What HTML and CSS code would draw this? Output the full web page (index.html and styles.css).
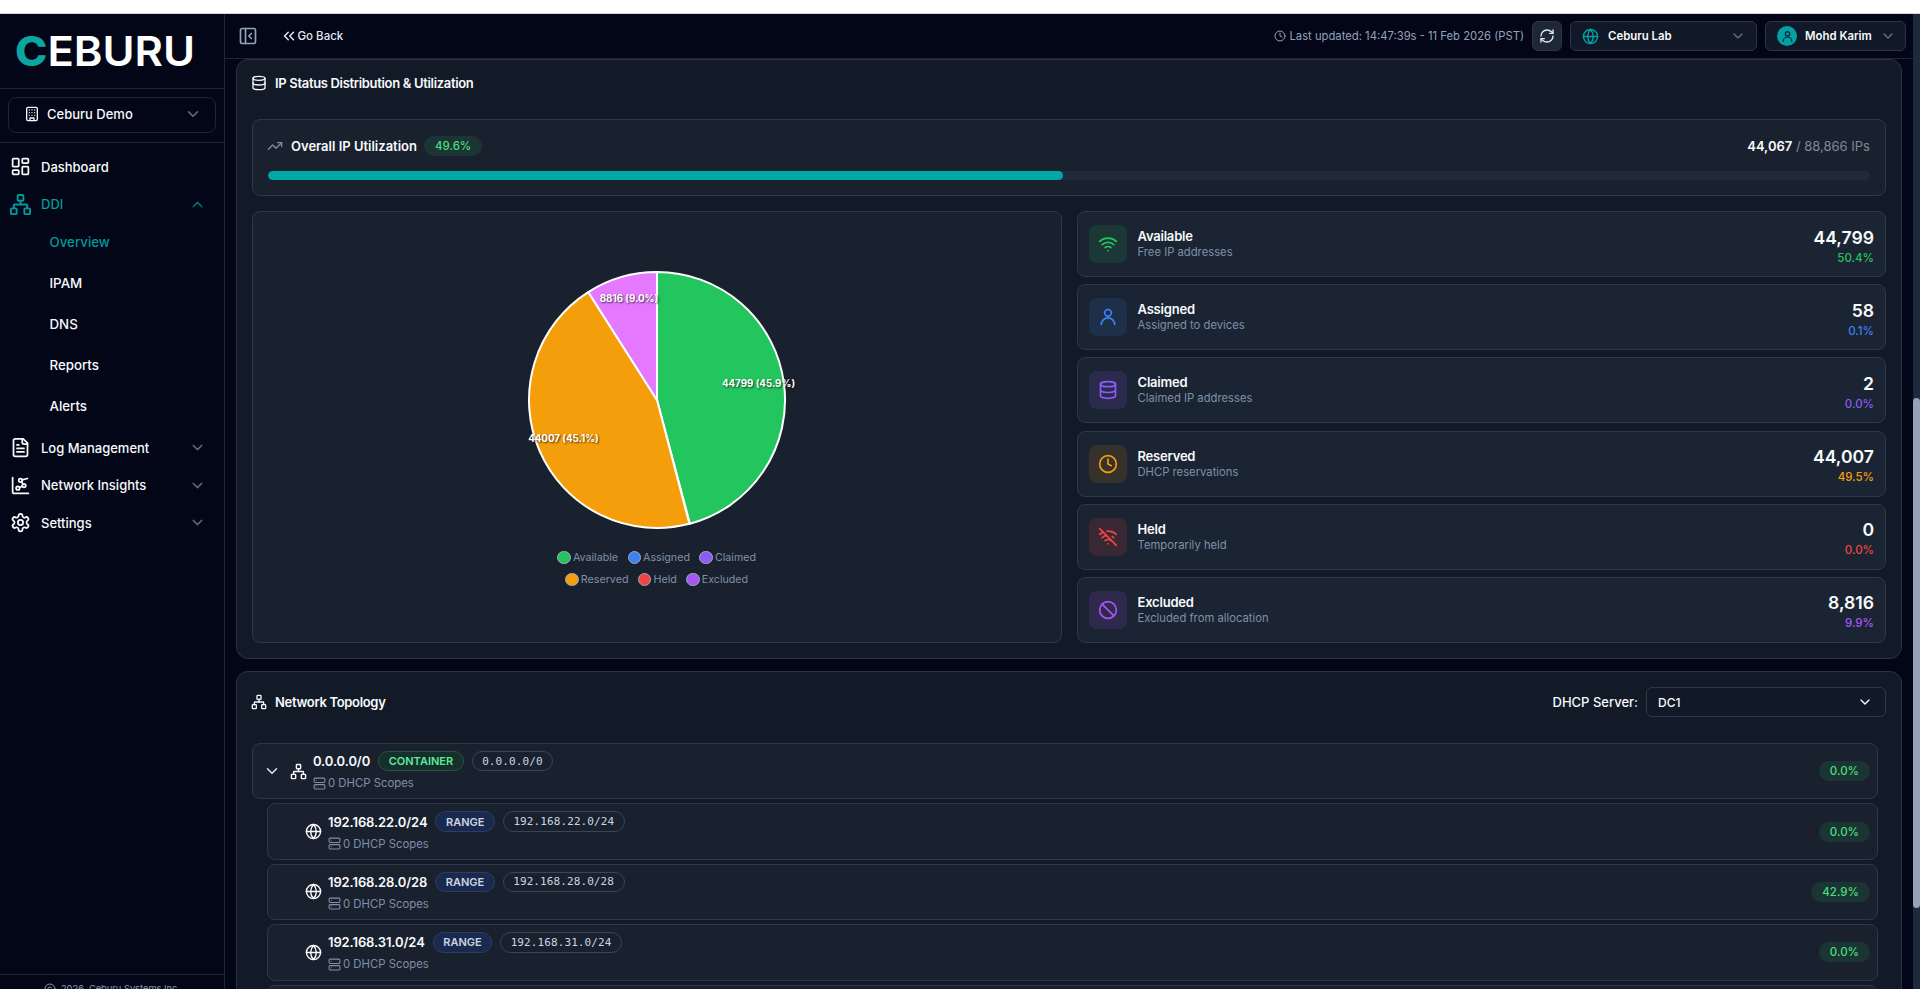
FILE: index.html
```html
<!DOCTYPE html>
<html lang="en">
<head>
<meta charset="utf-8">
<title>Ceburu - DDI Overview</title>
<link rel="stylesheet" href="styles.css">
</head>
<body>
<svg class="sprite" aria-hidden="true">
  <symbol id="i-panel" viewBox="0 0 24 24"><rect width="18" height="18" x="3" y="3" rx="2"/><path d="M9 3v18"/><path d="m16 15-3-3 3-3"/></symbol>
  <symbol id="i-chevrons" viewBox="0 0 24 24"><path d="m11 17-5-5 5-5"/><path d="m18 17-5-5 5-5"/></symbol>
  <symbol id="i-building" viewBox="0 0 24 24"><rect width="16" height="20" x="4" y="2" rx="2"/><path d="M9 22v-4h6v4"/><path d="M8 6h.01M16 6h.01M12 6h.01M12 10h.01M12 14h.01M16 10h.01M16 14h.01M8 10h.01M8 14h.01"/></symbol>
  <symbol id="i-dash" viewBox="0 0 24 24"><rect width="7" height="9" x="3" y="3" rx="1"/><rect width="7" height="5" x="14" y="3" rx="1"/><rect width="7" height="9" x="14" y="12" rx="1"/><rect width="7" height="5" x="3" y="16" rx="1"/></symbol>
  <symbol id="i-network" viewBox="0 0 24 24"><rect x="16" y="16" width="6" height="6" rx="1"/><rect x="2" y="16" width="6" height="6" rx="1"/><rect x="9" y="2" width="6" height="6" rx="1"/><path d="M5 16v-3a1 1 0 0 1 1-1h12a1 1 0 0 1 1 1v3"/><path d="M12 12V8"/></symbol>
  <symbol id="i-file" viewBox="0 0 24 24"><path d="M15 2H6a2 2 0 0 0-2 2v16a2 2 0 0 0 2 2h12a2 2 0 0 0 2-2V7Z"/><path d="M14 2v4a2 2 0 0 0 2 2h4"/><path d="M10 9H8M16 13H8M16 17H8"/></symbol>
  <symbol id="i-insights" viewBox="0 0 24 24"><path d="m13.11 7.664 1.78 2.672"/><path d="m14.162 12.788-3.324 1.424"/><path d="m20 4-6.06 1.515"/><path d="M3 3v16a2 2 0 0 0 2 2h16"/><circle cx="12" cy="6" r="2"/><circle cx="16" cy="12" r="2"/><circle cx="9" cy="15" r="2"/></symbol>
  <symbol id="i-settings" viewBox="0 0 24 24"><path d="M12.22 2h-.44a2 2 0 0 0-2 2v.18a2 2 0 0 1-1 1.73l-.43.25a2 2 0 0 1-2 0l-.15-.08a2 2 0 0 0-2.73.73l-.22.38a2 2 0 0 0 .73 2.73l.15.1a2 2 0 0 1 1 1.72v.51a2 2 0 0 1-1 1.74l-.15.09a2 2 0 0 0-.73 2.73l.22.38a2 2 0 0 0 2.73.73l.15-.08a2 2 0 0 1 2 0l.43.25a2 2 0 0 1 1 1.73V20a2 2 0 0 0 2 2h.44a2 2 0 0 0 2-2v-.18a2 2 0 0 1 1-1.73l.43-.25a2 2 0 0 1 2 0l.15.08a2 2 0 0 0 2.73-.73l.22-.39a2 2 0 0 0-.73-2.73l-.15-.08a2 2 0 0 1-1-1.74v-.5a2 2 0 0 1 1-1.74l.15-.09a2 2 0 0 0 .73-2.73l-.22-.38a2 2 0 0 0-2.73-.73l-.15.08a2 2 0 0 1-2 0l-.43-.25a2 2 0 0 1-1-1.73V4a2 2 0 0 0-2-2z"/><circle cx="12" cy="12" r="3"/></symbol>
  <symbol id="i-down" viewBox="0 0 24 24"><path d="m6 9 6 6 6-6"/></symbol>
  <symbol id="i-up" viewBox="0 0 24 24"><path d="m18 15-6-6-6 6"/></symbol>
  <symbol id="i-clock" viewBox="0 0 24 24"><circle cx="12" cy="12" r="10"/><path d="M12 6v6l4 2"/></symbol>
  <symbol id="i-refresh" viewBox="0 0 24 24"><path d="M3 12a9 9 0 0 1 9-9 9.75 9.75 0 0 1 6.74 2.74L21 8"/><path d="M21 3v5h-5"/><path d="M21 12a9 9 0 0 1-9 9 9.75 9.75 0 0 1-6.74-2.74L3 16"/><path d="M8 16H3v5"/></symbol>
  <symbol id="i-globe" viewBox="0 0 24 24"><circle cx="12" cy="12" r="10"/><path d="M12 2a14.5 14.5 0 0 0 0 20 14.5 14.5 0 0 0 0-20"/><path d="M2 12h20"/></symbol>
  <symbol id="i-user" viewBox="0 0 24 24"><circle cx="12" cy="7" r="4"/><path d="M20 21a8 8 0 0 0-16 0"/></symbol>
  <symbol id="i-db" viewBox="0 0 24 24"><ellipse cx="12" cy="5" rx="9" ry="3"/><path d="M3 5v14a9 3 0 0 0 18 0V5"/><path d="M3 12a9 3 0 0 0 18 0"/></symbol>
  <symbol id="i-trend" viewBox="0 0 24 24"><path d="M22 7l-8.500 8.500-5-5L2 17"/><path d="M16 7h6v6"/></symbol>
  <symbol id="i-wifi" viewBox="0 0 24 24"><path d="M12 20h.01"/><path d="M2 8.820a15 15 0 0 1 20 0"/><path d="M5 12.859a10 10 0 0 1 14 0"/><path d="M8.500 16.429a5 5 0 0 1 7 0"/></symbol>
  <symbol id="i-wifioff" viewBox="0 0 24 24"><path d="M12 20h.01"/><path d="M8.500 16.429a5 5 0 0 1 7 0"/><path d="M5 12.859a10 10 0 0 1 5.170-2.690"/><path d="M19 12.859a10 10 0 0 0-2.007-1.523"/><path d="M2 8.820a15 15 0 0 1 4.177-2.643"/><path d="M22 8.820a15 15 0 0 0-11.288-3.764"/><path d="m2 2 20 20"/></symbol>
  <symbol id="i-ban" viewBox="0 0 24 24"><circle cx="12" cy="12" r="10"/><path d="m4.900 4.900 14.200 14.200"/></symbol>
  <symbol id="i-server" viewBox="0 0 24 24"><rect width="20" height="8" x="2" y="2" rx="2"/><rect width="20" height="8" x="2" y="14" rx="2"/><path d="M6 6h.01M6 18h.01"/></symbol>
  <symbol id="i-copy" viewBox="0 0 24 24"><circle cx="12" cy="12" r="10"/><path d="M14.830 14.830a4 4 0 1 1 0-5.660"/></symbol>
</svg>

<div class="browser-strip"></div>
<div class="app">
  <aside class="sidebar">
    <div class="logo-wrap">
      <svg class="logo" viewBox="0 -10 180 50" role="img" aria-label="Ceburu">
        <text class="logo-text" x="0" y="29.500" textLength="180" lengthAdjust="spacingAndGlyphs"><tspan class="logo-c">C</tspan>EBURU</text>
      </svg>
    </div>
    <div class="org-wrap">
      <div class="org-select">
        <svg class="ic ic-16"><use href="#i-building"/></svg>
        <span class="org-name">Ceburu Demo</span>
        <svg class="ic ic-18 chev"><use href="#i-down"/></svg>
      </div>
    </div>
    <nav class="nav">
      <div class="nav-item"><svg class="ic ic-21"><use href="#i-dash"/></svg><span>Dashboard</span></div>
      <div class="nav-item is-active"><svg class="ic ic-23"><use href="#i-network"/></svg><span>DDI</span><svg class="ic ic-17 nav-chev"><use href="#i-up"/></svg></div>
      <div class="sub-list">
        <div class="sub-item is-active">Overview</div>
        <div class="sub-item">IPAM</div>
        <div class="sub-item">DNS</div>
        <div class="sub-item">Reports</div>
        <div class="sub-item">Alerts</div>
      </div>
      <div class="nav-item"><svg class="ic ic-21"><use href="#i-file"/></svg><span>Log Management</span><svg class="ic ic-17 nav-chev"><use href="#i-down"/></svg></div>
      <div class="nav-item"><svg class="ic ic-21"><use href="#i-insights"/></svg><span>Network Insights</span><svg class="ic ic-17 nav-chev"><use href="#i-down"/></svg></div>
      <div class="nav-item"><svg class="ic ic-21"><use href="#i-settings"/></svg><span>Settings</span><svg class="ic ic-17 nav-chev"><use href="#i-down"/></svg></div>
    </nav>
    <div class="side-foot"><svg class="ic ic-12"><use href="#i-copy"/></svg><span>2026, Ceburu Systems Inc.</span></div>
  </aside>

  <div class="main">
    <header class="topbar">
      <div class="top-left">
        <svg class="ic ic-20 toggle"><use href="#i-panel"/></svg>
        <div class="go-back"><svg class="ic ic-18"><use href="#i-chevrons"/></svg><span>Go Back</span></div>
      </div>
      <div class="top-right">
        <div class="updated"><svg class="ic ic-12"><use href="#i-clock"/></svg><span>Last updated: 14:47:39s - 11 Feb 2026 (PST)</span></div>
        <div class="refresh"><svg class="ic ic-16"><use href="#i-refresh"/></svg></div>
        <div class="top-select site"><svg class="ic ic-17 teal"><use href="#i-globe"/></svg><span class="top-label">Ceburu Lab</span><svg class="ic ic-16 chev"><use href="#i-down"/></svg></div>
        <div class="top-select user"><span class="avatar"><svg class="ic ic-13"><use href="#i-user"/></svg></span><span class="top-label">Mohd Karim</span><svg class="ic ic-16 chev"><use href="#i-down"/></svg></div>
      </div>
    </header>

    <main class="content">
      <section class="panel panel-status">
        <h2 class="panel-title"><svg class="ic ic-16"><use href="#i-db"/></svg>IP Status Distribution &amp; Utilization</h2>

        <div class="overall">
          <div class="overall-head">
            <svg class="ic ic-16 muted"><use href="#i-trend"/></svg>
            <span class="overall-title">Overall IP Utilization</span>
            <span class="pct-badge">49.6%</span>
            <span class="overall-count"><b>44,067</b> / 88,866 IPs</span>
          </div>
          <div class="bar"><div class="bar-fill" style="width:49.6%"></div></div>
        </div>

        <div class="status-grid">
          <div class="pie-card">
            <svg class="pie" viewBox="0 0 256 256" width="258" height="258">
              <path class="slice s-green" d="M128 128V1A127 127 0 0 1 160.660 250.740Z"/>
              <path class="slice s-orange" d="M128 128L160.160 250.860A127 127 0 0 1 59.760 20.890Z"/>
              <path class="slice s-pink" d="M128 128L59.760 20.890A127 127 0 0 1 128 1Z"/>
              <text class="pie-label" x="228.700" y="115.500">44799 (45.9%)</text>
              <text class="pie-label" x="35.200" y="169.500">44007 (45.1%)</text>
              <text class="pie-label" x="100.200" y="30.500">8816 (9.0%)</text>
            </svg>
            <div class="legend">
              <div class="legend-row">
                <span class="legend-item"><i class="dot d-green"></i>Available</span>
                <span class="legend-item"><i class="dot d-blue"></i>Assigned</span>
                <span class="legend-item"><i class="dot d-violet"></i>Claimed</span>
              </div>
              <div class="legend-row">
                <span class="legend-item"><i class="dot d-amber"></i>Reserved</span>
                <span class="legend-item"><i class="dot d-red"></i>Held</span>
                <span class="legend-item"><i class="dot d-purple"></i>Excluded</span>
              </div>
            </div>
          </div>

          <div class="stat-list">
            <div class="stat c-green"><span class="stat-icon"><svg class="ic ic-20"><use href="#i-wifi"/></svg></span><div class="stat-text"><div class="stat-name">Available</div><div class="stat-desc">Free IP addresses</div></div><div class="stat-num"><div class="stat-value">44,799</div><div class="stat-pct">50.4%</div></div></div>
            <div class="stat c-blue"><span class="stat-icon"><svg class="ic ic-20"><use href="#i-user"/></svg></span><div class="stat-text"><div class="stat-name">Assigned</div><div class="stat-desc">Assigned to devices</div></div><div class="stat-num"><div class="stat-value">58</div><div class="stat-pct">0.1%</div></div></div>
            <div class="stat c-violet"><span class="stat-icon"><svg class="ic ic-20"><use href="#i-db"/></svg></span><div class="stat-text"><div class="stat-name">Claimed</div><div class="stat-desc">Claimed IP addresses</div></div><div class="stat-num"><div class="stat-value">2</div><div class="stat-pct">0.0%</div></div></div>
            <div class="stat c-amber"><span class="stat-icon"><svg class="ic ic-20"><use href="#i-clock"/></svg></span><div class="stat-text"><div class="stat-name">Reserved</div><div class="stat-desc">DHCP reservations</div></div><div class="stat-num"><div class="stat-value">44,007</div><div class="stat-pct">49.5%</div></div></div>
            <div class="stat c-red"><span class="stat-icon"><svg class="ic ic-20"><use href="#i-wifioff"/></svg></span><div class="stat-text"><div class="stat-name">Held</div><div class="stat-desc">Temporarily held</div></div><div class="stat-num"><div class="stat-value">0</div><div class="stat-pct">0.0%</div></div></div>
            <div class="stat c-purple"><span class="stat-icon"><svg class="ic ic-20"><use href="#i-ban"/></svg></span><div class="stat-text"><div class="stat-name">Excluded</div><div class="stat-desc">Excluded from allocation</div></div><div class="stat-num"><div class="stat-value">8,816</div><div class="stat-pct">9.9%</div></div></div>
          </div>
        </div>
      </section>

      <section class="panel panel-topology">
        <div class="topo-head">
          <h2 class="panel-title"><svg class="ic ic-16"><use href="#i-network"/></svg>Network Topology</h2>
          <div class="server-pick">
            <span class="server-label">DHCP Server:</span>
            <div class="server-select"><span>DC1</span><svg class="ic ic-16"><use href="#i-down"/></svg></div>
          </div>
        </div>

        <div class="tree">
          <div class="tree-row">
            <svg class="ic tree-chev"><use href="#i-down"/></svg>
            <svg class="ic ic-17"><use href="#i-network"/></svg>
            <div class="tree-info">
              <div class="tree-line"><span class="tree-name">0.0.0.0/0</span><span class="tag tag-container">CONTAINER</span><span class="tag tag-mono">0.0.0.0/0</span></div>
              <div class="tree-sub"><svg class="ic ic-13"><use href="#i-server"/></svg>0 DHCP Scopes</div>
            </div>
            <span class="pct-badge">0.0%</span>
          </div>
          <div class="tree-row is-child">
            <span class="tree-chev"></span>
            <svg class="ic ic-17"><use href="#i-globe"/></svg>
            <div class="tree-info">
              <div class="tree-line"><span class="tree-name">192.168.22.0/24</span><span class="tag tag-range">RANGE</span><span class="tag tag-mono">192.168.22.0/24</span></div>
              <div class="tree-sub"><svg class="ic ic-13"><use href="#i-server"/></svg>0 DHCP Scopes</div>
            </div>
            <span class="pct-badge">0.0%</span>
          </div>
          <div class="tree-row is-child">
            <span class="tree-chev"></span>
            <svg class="ic ic-17"><use href="#i-globe"/></svg>
            <div class="tree-info">
              <div class="tree-line"><span class="tree-name">192.168.28.0/28</span><span class="tag tag-range">RANGE</span><span class="tag tag-mono">192.168.28.0/28</span></div>
              <div class="tree-sub"><svg class="ic ic-13"><use href="#i-server"/></svg>0 DHCP Scopes</div>
            </div>
            <span class="pct-badge">42.9%</span>
          </div>
          <div class="tree-row is-child">
            <span class="tree-chev"></span>
            <svg class="ic ic-17"><use href="#i-globe"/></svg>
            <div class="tree-info">
              <div class="tree-line"><span class="tree-name">192.168.31.0/24</span><span class="tag tag-range">RANGE</span><span class="tag tag-mono">192.168.31.0/24</span></div>
              <div class="tree-sub"><svg class="ic ic-13"><use href="#i-server"/></svg>0 DHCP Scopes</div>
            </div>
            <span class="pct-badge">0.0%</span>
          </div>
          <div class="tree-row is-child"></div>
        </div>
      </section>
    </main>
  </div>

  <div class="scrollbar"><div class="scroll-thumb"></div></div>
</div>
</body>
</html>
```

FILE: styles.css
```css
* { box-sizing: border-box; }

html, body {
  margin: 0;
  height: 100%;
  overflow: hidden;
}

body {
  display: flex;
  flex-direction: column;
  background: #020617;
  color: #f8fafc;
  font-family: Inter, "Liberation Sans", sans-serif;
  font-size: 14px;
}

.sprite { display: none; }

.browser-strip {
  flex: none;
  height: 14px;
  background: #fff;
  border-bottom: 1px solid #d6d6d6;
}

.app {
  flex: 1;
  min-height: 0;
  display: flex;
}

/* icons */
.ic {
  flex: none;
  fill: none;
  stroke: currentColor;
  stroke-width: 2;
  stroke-linecap: round;
  stroke-linejoin: round;
}
.ic-12 { width: 12px; height: 12px; }
.ic-13 { width: 13px; height: 13px; }
.ic-16 { width: 16px; height: 16px; }
.ic-17 { width: 17px; height: 17px; }
.ic-18 { width: 18px; height: 18px; }
.ic-20 { width: 20px; height: 20px; }
.ic-21 { width: 21px; height: 21px; }
.ic-23 { width: 23px; height: 23px; }
.muted { color: #7f8a9a; }
.teal { color: #00a3a3; }
.chev { color: #64748b; }

/* sidebar */
.sidebar {
  flex: none;
  width: 225px;
  display: flex;
  flex-direction: column;
  overflow: hidden;
  border-right: 1px solid #1e2635;
}

.logo-wrap {
  flex: none;
  height: 75px;
  padding: 12px 0 0 15px;
  border-bottom: 1px solid #1e2635;
}

.logo {
  display: block;
  width: 180px;
  height: 50px;
}

.logo-text {
  font-family: Inter, sans-serif;
  font-size: 41px;
  font-weight: 600;
  fill: #fff;
}
.logo-c {
  fill: #0ca5a0;
  font-weight: 800;
}

.org-wrap {
  flex: none;
  padding: 8px 8px 9px;
  border-bottom: 1px solid #1e2635;
}

.org-select {
  display: flex;
  align-items: center;
  height: 36px;
  padding: 0 13px 3px 15px;
  border: 1px solid #1e2635;
  border-radius: 8px;
  font-weight: 500;
}
.org-select .ic-16 { margin-right: 7px; }
.org-name { flex: 1; font-size: 13px; }

.nav {
  flex: 1;
  padding-top: 5px;
}

.nav-item {
  display: flex;
  align-items: center;
  height: 37.500px;
  padding-left: 10px;
  padding-right: 18.500px;
  font-size: 13px;
  font-weight: 500;
}
.nav-item > span { flex: 1; margin-left: 10px; }
.nav-item > .ic-23 { margin-left: -1px; margin-right: -1px; }
.nav-chev { color: #5b6677; }
.nav-item.is-active { color: #009a9a; }
.nav-item.is-active .nav-chev { color: #00706f; }

.sub-list {
  margin: -1.500px 0 2.500px;
}
.sub-item {
  display: flex;
  align-items: center;
  height: 41px;
  padding-left: 49.500px;
  font-size: 13.300px;
  font-weight: 500;
}
.sub-item.is-active { color: #009a9a; }

.side-foot {
  flex: none;
  height: 15px;
  display: flex;
  align-items: flex-start;
  justify-content: center;
  gap: 5px;
  padding-top: 8px;
  border-top: 1px solid #1e2635;
  color: #8a9ab3;
  font-size: 9.300px;
  line-height: 12px;
  white-space: nowrap;
}

/* main */
.main {
  flex: 1;
  min-width: 0;
  display: flex;
  flex-direction: column;
}

.topbar {
  flex: none;
  height: 45px;
  display: flex;
  align-items: center;
  justify-content: space-between;
  padding: 0 7px 0 12.500px;
  border-bottom: 1px solid #1e2635;
}

.top-left {
  display: flex;
  align-items: center;
  gap: 22px;
}
.toggle { color: #94a3b8; }

.go-back {
  display: flex;
  align-items: center;
  font-size: 11.500px;
  font-weight: 500;
  color: #e2e8f0;
}

.top-right {
  display: flex;
  align-items: center;
  gap: 8px;
}

.updated {
  display: flex;
  align-items: center;
  gap: 3px;
  font-size: 11.250px;
  color: #94a3b8;
}

.refresh {
  width: 30px;
  height: 30px;
  display: flex;
  align-items: center;
  justify-content: center;
  background: #1e2735;
  border: 1px solid #2c3545;
  border-radius: 6px;
  color: #e2e8f0;
}

.top-select {
  height: 30px;
  display: flex;
  align-items: center;
  background: #111827;
  border: 1px solid #2c3545;
  border-radius: 6px;
  padding: 0 10px 0 11px;
}
.top-select.site { width: 187px; gap: 9px; }
.top-select.user { width: 141px; gap: 8px; }
.top-label {
  flex: 1;
  font-size: 11.400px;
  font-weight: 600;
  white-space: nowrap;
}

.avatar {
  width: 20px;
  height: 20px;
  flex: none;
  display: flex;
  align-items: center;
  justify-content: center;
  border-radius: 50%;
  background: #00a3a3;
  color: #0f172a;
}

.content {
  flex: 1;
  min-height: 0;
  overflow: hidden;
  padding: 0 11px;
}

.panel {
  background: #121927;
  border: 1px solid #2a3342;
  border-radius: 12px;
  padding: 15px;
}

.panel-status {
  height: 600px;
  margin-bottom: 12px;
}

.panel-title {
  display: flex;
  align-items: center;
  gap: 8px;
  margin: 0 0 0 -1px;
  font-size: 13px;
  letter-spacing: -0.325px;
  line-height: 16px;
  font-weight: 600;
}
.panel-status > .panel-title { margin-bottom: 28px; }

.overall {
  height: 77px;
  padding: 15px 15px 0;
  background: #1a212e;
  border: 1px solid #2f3846;
  border-radius: 8px;
}

.overall-head {
  display: flex;
  align-items: center;
  height: 21px;
}
.overall-head > .ic { margin-left: -1px; }
.overall-title {
  margin-left: 8px;
  font-size: 13px;
  font-weight: 600;
}
.overall-head .pct-badge { margin-left: 7px; }
.overall-count {
  margin-left: auto;
  font-size: 13px;
  color: #7f8a9a;
}
.overall-count b { color: #f8fafc; font-weight: 600; }

.pct-badge {
  flex: none;
  height: 20px;
  display: inline-flex;
  align-items: center;
  padding: 0 11px;
  border-radius: 10px;
  background: rgba(34, 197, 94, 0.12);
  color: #4ade80;
  font-size: 11.500px;
  font-weight: 500;
}

.bar {
  height: 9px;
  margin-top: 15px;
  background: #1f2a3a;
  border-radius: 5px;
  overflow: hidden;
}
.bar-fill {
  height: 100%;
  background: #00a8a8;
  border-radius: 5px;
}

.status-grid {
  display: grid;
  grid-template-columns: 1fr 1fr;
  gap: 15px;
  height: 432px;
  margin-top: 15px;
}

.pie-card {
  display: flex;
  flex-direction: column;
  align-items: center;
  padding-top: 59px;
  background: #1a212e;
  border: 1px solid #2f3846;
  border-radius: 8px;
}

.pie {
  display: block;
  overflow: visible;
}

.slice {
  stroke: #fff;
  stroke-width: 2;
  stroke-linejoin: round;
}
.s-green { fill: #22c55e; }
.s-orange { fill: #f59e0b; }
.s-pink { fill: #e478ff; }

.pie-label {
  fill: #fff;
  font-family: Inter, sans-serif;
  font-size: 9.700px;
  font-weight: 700;
  text-anchor: middle;
  text-shadow: 1px 1px 2px rgba(0, 0, 0, 0.7);
}

.legend {
  display: flex;
  flex-direction: column;
  gap: 7px;
  margin-top: 21px;
}
.legend-row {
  display: flex;
  justify-content: center;
  gap: 9.500px;
}
.legend-item {
  display: flex;
  align-items: center;
  gap: 2px;
  font-size: 10.700px;
  line-height: 15px;
  color: #7f90a8;
}
.dot {
  width: 13.500px;
  height: 13.500px;
  border-radius: 50%;
  border: 1px solid #a2a9b3;
}
.d-green { background: #22c55e; }
.d-blue { background: #3b82f6; }
.d-violet { background: #8b5cf6; }
.d-amber { background: #f59e0b; }
.d-red { background: #ef4444; }
.d-purple { background: #a855f7; }

.stat-list {
  display: grid;
  grid-auto-rows: 1fr;
  gap: 7.200px;
}

.stat {
  display: flex;
  align-items: center;
  padding: 0 11px 0 11px;
  background: #1b2432;
  border: 1px solid #2f3846;
  border-radius: 8px;
}

.stat-icon {
  flex: none;
  width: 38px;
  height: 38px;
  display: flex;
  align-items: center;
  justify-content: center;
  border-radius: 8px;
  margin-right: 11px;
}

.stat-text { flex: 1; }
.stat-name {
  font-size: 13px;
  letter-spacing: -0.200px;
  line-height: 16px;
  font-weight: 600;
}
.stat-desc {
  font-size: 11.250px;
  line-height: 16px;
  color: #7f90a8;
}
.stat-num {
  text-align: right;
  padding-top: 5px;
}
.stat-value {
  font-size: 17.600px;
  line-height: 22px;
  font-weight: 600;
}
.stat-pct {
  font-size: 11.500px;
  line-height: 18px;
  font-weight: 500;
}

.c-green .stat-icon { background: rgba(34, 197, 94, 0.12); color: #22c55e; }
.c-blue .stat-icon { background: rgba(59, 130, 246, 0.12); color: #3b82f6; }
.c-violet .stat-icon { background: rgba(139, 92, 246, 0.14); color: #8b5cf6; }
.c-amber .stat-icon { background: rgba(245, 158, 11, 0.12); color: #f59e0b; }
.c-red .stat-icon { background: rgba(239, 68, 68, 0.14); color: #ef4444; }
.c-purple .stat-icon { background: rgba(168, 85, 247, 0.14); color: #a855f7; }
.c-green .stat-pct { color: #22c55e; }
.c-blue .stat-pct { color: #3b82f6; }
.c-violet .stat-pct { color: #8b5cf6; }
.c-amber .stat-pct { color: #f59e0b; }
.c-red .stat-pct { color: #ef4444; }
.c-purple .stat-pct { color: #a855f7; }

/* topology */
.topo-head {
  display: flex;
  align-items: center;
  justify-content: space-between;
  height: 30px;
}

.server-pick {
  display: flex;
  align-items: center;
  gap: 8px;
}
.server-label { font-size: 13px; font-weight: 500; }
.server-select {
  width: 240px;
  height: 30px;
  display: flex;
  align-items: center;
  justify-content: space-between;
  padding: 0 12px 0 11px;
  background: #111827;
  border: 1px solid #2f3846;
  border-radius: 6px;
  font-size: 12px;
  font-weight: 500;
}

.tree {
  display: flex;
  flex-direction: column;
  gap: 4px;
  margin: 26px 8px 0 0;
}

.tree-row {
  flex: none;
  height: 56.400px;
  display: flex;
  align-items: center;
  padding: 0 7px 0 13px;
  background: #1a212e;
  border: 1px solid #2f3846;
  border-radius: 8px;
}
.tree-row.is-child { margin-left: 15px; }

.tree-chev {
  flex: none;
  width: 18px;
  height: 18px;
  margin: 0 9px 0 -3px;
  color: #e2e8f0;
}
.tree-info { flex: 1; margin-left: 6px; }

.tree-line {
  display: flex;
  align-items: center;
  gap: 8px;
  height: 20px;
  margin-bottom: 4px;
}
.tree-name {
  font-size: 13px;
  letter-spacing: -0.100px;
  font-weight: 600;
}

.tag {
  height: 20.500px;
  display: inline-flex;
  align-items: center;
  padding: 0 9.500px;
  border-radius: 11px;
  border: 1px solid #3a4556;
  font-size: 11px;
}
.tag-container {
  color: #5eea9c;
  background: #15302a;
  border-color: #2a5240;
  font-weight: 600;
}
.tag-range {
  color: #cbd5e1;
  background: #1a2a4e;
  border-color: #2e3e60;
  font-weight: 600;
}
.tag-mono {
  color: #cbd5e1;
  font-family: "DejaVu Sans Mono", monospace;
  letter-spacing: 0.100px;
}

.tree-sub {
  display: flex;
  align-items: center;
  gap: 2px;
  height: 16px;
  font-size: 11.350px;
  color: #7f90a8;
}

/* page scrollbar */
.scrollbar {
  flex: none;
  width: 7px;
  background: #1e293b;
}
.scroll-thumb {
  height: 510px;
  margin-top: 384px;
  background: #94a3b8;
  border-radius: 4px;
}
```
